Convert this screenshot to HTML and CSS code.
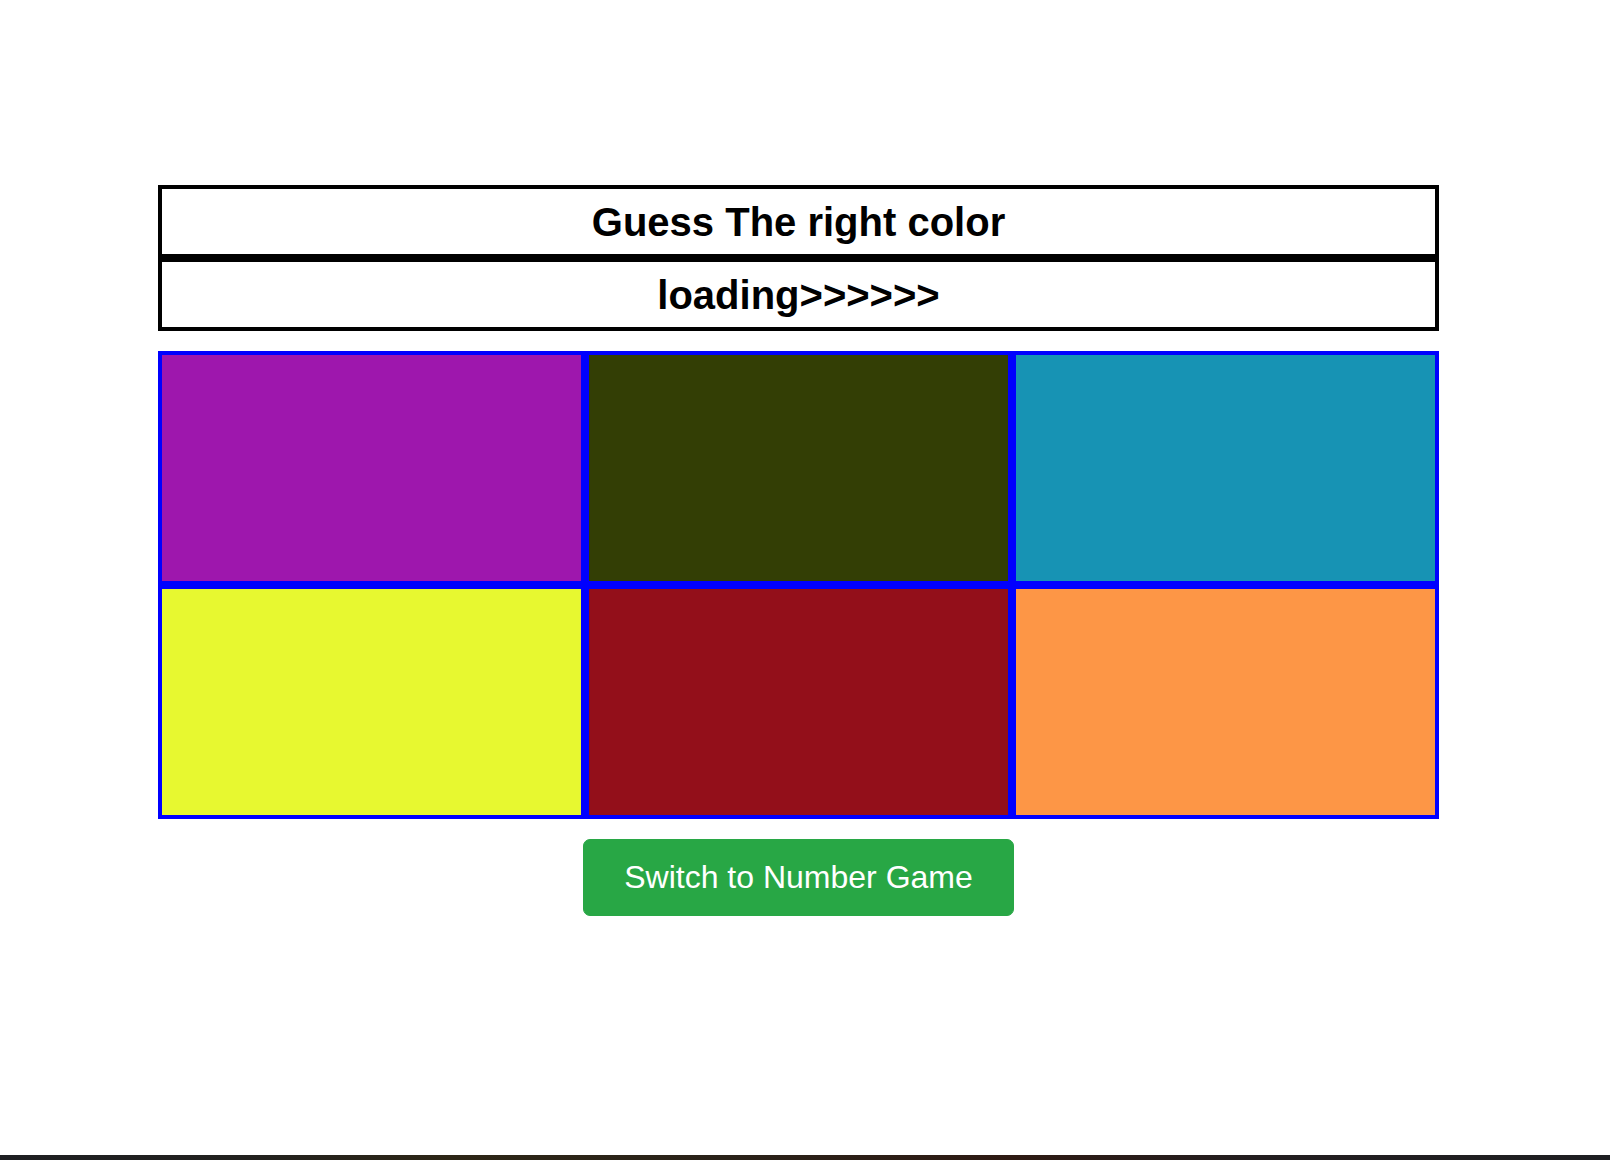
FILE: index.html
```html
<!DOCTYPE html>
<html lang="en">
<head>
<meta charset="utf-8">
<title>Guess The right color</title>
<link rel="stylesheet" href="styles.css">
</head>
<body>
<div class="page">
  <main class="game">
    <div class="title-box"><h1 class="title">Guess The right color</h1></div>
    <div class="title-box"><h2 class="status">loading&gt;&gt;&gt;&gt;&gt;&gt;</h2></div>
    <div class="board">
      <div class="cell c1"></div>
      <div class="cell c2"></div>
      <div class="cell c3"></div>
      <div class="cell c4"></div>
      <div class="cell c5"></div>
      <div class="cell c6"></div>
    </div>
    <div class="actions">
      <button class="switch-btn" type="button">Switch to Number Game</button>
    </div>
  </main>
  <div class="taskbar-edge"></div>
</div>
</body>
</html>
```

FILE: styles.css
```css
* { box-sizing: border-box; }
html, body { margin: 0; padding: 0; background: #ffffff; }
body { font-family: "Liberation Sans", Arial, sans-serif; color: #000; }

.page {
  height: 1160px;
  display: flex;
  flex-direction: column;
}

.game {
  flex: 1;
  padding: 185px 171px 0 158px;
  display: flex;
  flex-direction: column;
}

.title-box {
  height: 73px;
  border: 4px solid #000;
  display: flex;
  align-items: center;
  justify-content: center;
}

.title, .status {
  margin: 0;
  font-size: 40px;
  font-weight: bold;
  line-height: 46px;
}

.board {
  margin-top: 20px;
  display: grid;
  grid-template-columns: repeat(3, 427px);
  grid-template-rows: repeat(2, 234px);
}

.cell { border: 4px solid #0000ff; }
.c1 { background: #9e17ad; }
.c2 { background: #333e05; }
.c3 { background: #1793b4; }
.c4 { background: #e7f830; }
.c5 { background: #930f1a; }
.c6 { background: #fd9646; }

.actions {
  margin-top: 20px;
  display: flex;
  justify-content: center;
}

.switch-btn {
  font-family: "Liberation Sans", Arial, sans-serif;
  font-size: 32px;
  color: #fff;
  background: #28a745;
  border: 1px solid #28a745;
  border-radius: 7px;
  padding: 19px 40px;
  line-height: 37px;
  cursor: pointer;
}

.taskbar-edge {
  height: 5px;
  background: linear-gradient(90deg, #1e1f22 0%, #22211f 15%, #2d2616 28%, #2a2219 45%, #2e1a13 63%, #231e20 78%, #1e1f22 100%);
}
```
